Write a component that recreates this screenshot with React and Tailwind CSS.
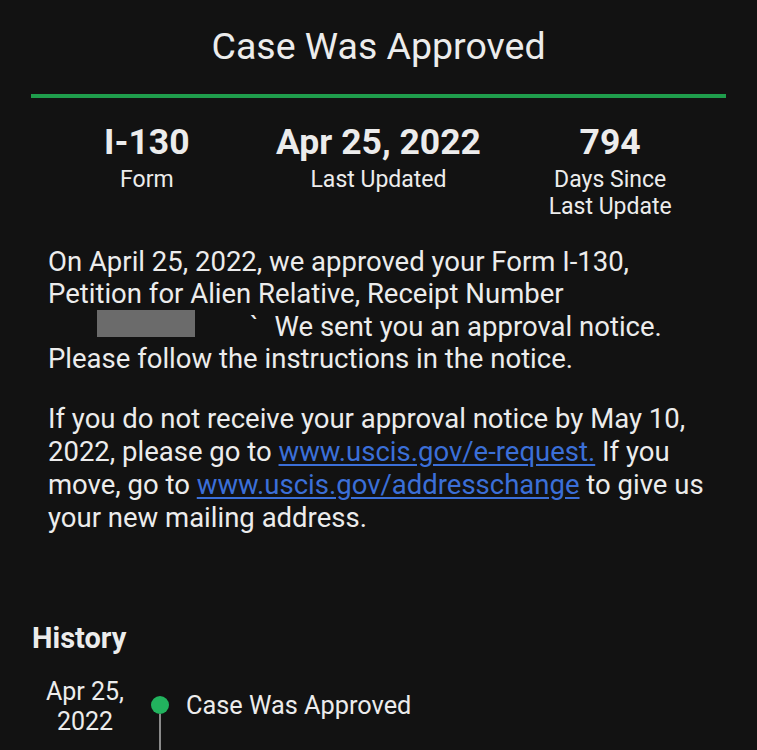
export default function App() {
  return (
    <div className="min-h-[750px] bg-[#121212] text-[#ececec] overflow-hidden" style={{ fontFamily: 'Roboto, "Noto Sans", sans-serif' }}>
      <h1 className="pt-[24px] text-center text-[37.5px] leading-[44px] font-normal">Case Was Approved</h1>
      <div className="mx-[31px] mt-[26px] h-[4px] bg-[#1f9d4c]"></div>
      <div className="mx-[31px] mt-[23px] grid grid-cols-3 text-center">
        <div className="flex flex-col items-center">
          <div className="text-[35.5px] leading-[42px] font-bold">I-130</div>
          <div className="mt-[3px] text-[23px] leading-[27px]">Form</div>
        </div>
        <div className="flex flex-col items-center">
          <div className="text-[35.5px] leading-[42px] font-bold">Apr 25, 2022</div>
          <div className="mt-[3px] text-[23px] leading-[27px]">Last Updated</div>
        </div>
        <div className="flex flex-col items-center">
          <div className="text-[35.5px] leading-[42px] font-bold">794</div>
          <div className="mt-[3px] text-[23px] leading-[27px]">Days Since<br />Last Update</div>
        </div>
      </div>
      <div className="mt-[26px] pl-[48px] text-[27.5px] whitespace-nowrap">
        <p className="leading-[32px]">
          On April 25, 2022, we approved your Form I-130,<br />
          Petition for Alien Relative, Receipt Number<br />
          <span className="inline-block w-[49px]"></span>
          <span className="inline-block h-[27px] w-[98px] bg-[#6b6b6b] align-[-1px]"></span>
          <span className="inline-block w-[55px]"></span>
          <span>`</span>
          <span className="inline-block w-[16px]"></span>
          We sent you an approval notice.<br />
          Please follow the instructions in the notice.
        </p>
        <p className="mt-[27px] leading-[33px]">
          If you do not receive your approval notice by May 10,<br />
          2022, please go to <a className="text-[#3b6fd8] underline underline-offset-[3px]">www.uscis.gov/e-request.</a> If you<br />
          move, go to <a className="text-[#3b6fd8] underline underline-offset-[3px]">www.uscis.gov/addresschange</a> to give us<br />
          your new mailing address.
        </p>
      </div>
      <div className="mt-[87px] pl-[32px] text-[29px] leading-[34px] font-bold">History</div>
      <div className="mt-[22px] flex items-start">
        <div className="ml-[43px] w-[84px] text-center text-[25px] leading-[30px]">Apr 25,<br />2022</div>
        <div className="ml-[24px] flex flex-col items-center pt-[19px]">
          <div className="h-[18px] w-[18px] rounded-full bg-[#22b35e]"></div>
          <div className="h-[60px] w-[2px] bg-[#8a8a8a]"></div>
        </div>
        <div className="ml-[17px] pt-[13px] text-[25.3px] leading-[32px]">Case Was Approved</div>
      </div>
    </div>
  );
}
